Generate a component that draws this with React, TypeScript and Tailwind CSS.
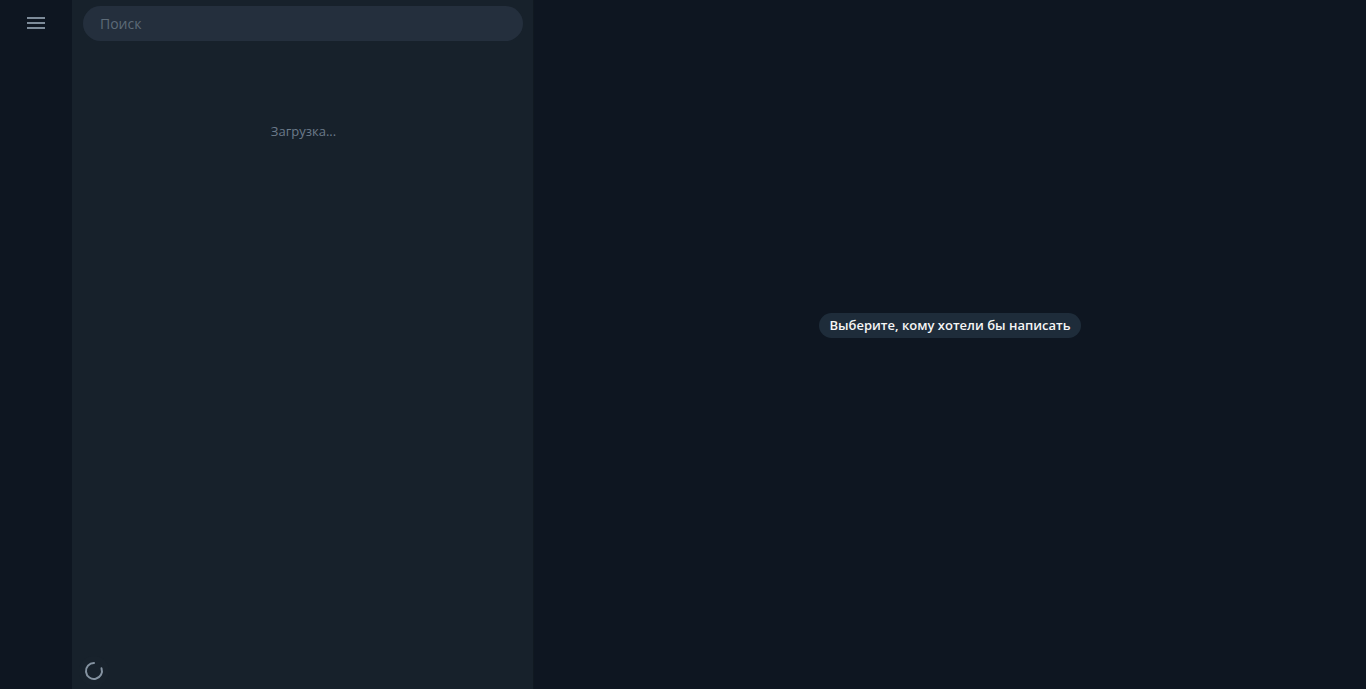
import React from "react";

export default function App() {
  return (
    <div
      className="flex h-[689px] w-[1366px] overflow-hidden bg-[#0e1621]"
      style={{ fontFamily: '"Open Sans", "Noto Sans", sans-serif' }}
    >
      {/* Left rail */}
      <div className="flex w-[72px] shrink-0 flex-col items-center bg-[#0e1621] pt-[17px]">
        <svg width="18" height="13" viewBox="0 0 18 13" className="ml-[-1px]">
          <rect x="0" y="0" width="18" height="2" fill="#7d8b99" />
          <rect x="0" y="5" width="18" height="2" fill="#7d8b99" />
          <rect x="0" y="10" width="18" height="2" fill="#7d8b99" />
        </svg>
      </div>

      {/* Middle panel */}
      <div className="flex w-[461px] shrink-0 flex-col bg-[#17212b]">
        <div className="px-[11px] pt-[6px] pr-[10px]">
          <div className="flex h-[35px] items-center rounded-full bg-[#242f3d] pl-[17px] text-[14px] text-[#5d6b78]">
            Поиск
          </div>
        </div>
        <div className="mt-[81px] pl-[2px] text-center text-[13px] text-[#6b7a8a]">Загрузка...</div>
        <div className="flex-1" />
        <div className="pb-[3px] pl-[7px]">
          <div className="flex h-[30px] w-[30px] items-center justify-center rounded-full bg-[#18222c]">
            <svg width="22" height="22" viewBox="0 0 22 22">
              <path
                d="M 11 3 A 8 8 0 1 0 18.5 8.3"
                fill="none"
                stroke="#8593a1"
                strokeWidth="2"
                strokeLinecap="round"
              />
            </svg>
          </div>
        </div>
      </div>

      {/* Divider */}
      <div className="w-px shrink-0 bg-[#101921]" />

      {/* Right area */}
      <div className="flex flex-1 items-center justify-center bg-[#0e1621] pb-[38px]">
        <div className="flex h-[25px] items-center rounded-full bg-[#1e2c3a] px-[10px] text-[13px] font-semibold text-[#f5f5f5]">
          Выберите, кому хотели бы написать
        </div>
      </div>
    </div>
  );
}
